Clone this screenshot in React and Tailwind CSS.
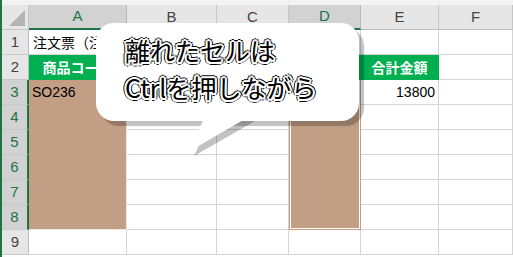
import React from 'react';

const cols = [
    { k: 'A', w: 'w-[98px]', sel: true },
    { k: 'B', w: 'w-[90px]' },
    { k: 'C', w: 'w-[72px]' },
    { k: 'D', w: 'w-[72px]', sel: true },
    { k: 'E', w: 'w-[78px]' },
    { k: 'F', w: 'w-[74px]' },
];

const jp = "font-['Noto_Sans_CJK_JP','Noto_Sans',sans-serif]";
const lat = "font-['Liberation_Sans',Arial,sans-serif]";

const headers2 = { A: '商品コード', B: '商品名', C: '単価', D: '数量', E: '合計金額' };

// returns [className, content] for a body cell
const cellFor = (r, k) => {
    const base = 'h-full border-r border-b border-[#d4d4d4] bg-white';
    if (r === 1 && k === 'A') {
        return [base + ' overflow-visible whitespace-nowrap px-[4px] text-[14px] text-black ' + jp, '注文票（注文番号別）'];
    }
    if (r === 2 && headers2[k]) {
        return ['h-full border-r border-b border-[#00b050] bg-[#00b050] justify-center text-[14px] font-bold text-white ' + jp, headers2[k]];
    }
    if (r >= 3 && r <= 8 && k === 'A') {
        const b = r === 8 ? ' border-b border-b-[#f1e7df]' : '';
        return ['h-full bg-[#c19e84] border-r border-r-[#f1e7df] px-[3px] text-[14px] text-black ' + lat + b, r === 3 ? 'SO236' : ''];
    }
    if (r >= 3 && r <= 8 && k === 'D') {
        if (r === 8) {
            return ['h-full bg-[#c19e84] border-x border-b border-[#c99a7e] shadow-[inset_1px_0_0_#fff,inset_-1px_0_0_#fff,inset_0_-1px_0_#fff]', ''];
        }
        return ['h-full bg-[#c19e84] border-x border-[#c99a7e] shadow-[inset_1px_0_0_#fff,inset_-1px_0_0_#fff]', ''];
    }
    if (r === 3 && k === 'E') {
        return [base + ' justify-end px-[3px] text-[14px] text-black ' + lat, '13800'];
    }
    return [base, ''];
};

const App = () => {
    const rows = [1, 2, 3, 4, 5, 6, 7, 8, 9];

    return (
        <div className="relative w-[513px] h-[257px] overflow-hidden bg-white flex">
            {/* selection edge */}
            <div className="w-[2px] h-full bg-[#217346]" />

            <div className="flex flex-col">
                <div className="h-[5px] w-[511px] bg-[#f3f3f3]" />

                {/* column header */}
                <div className="flex h-[25px]">
                    <div className="relative w-[27px] h-full bg-[#e6e6e6] border-r border-b border-[#c6c6c6]">
                        <svg className="absolute right-[3px] bottom-[3px]" width="16" height="16" viewBox="0 0 16 16">
                            <polygon points="16,0 16,16 0,16" fill="#b4b4b4" />
                        </svg>
                    </div>
                    {cols.map((c) => (
                        <div
                            key={c.k}
                            className={
                                c.w +
                                ' h-full flex items-center justify-center text-[15px] ' + lat + ' ' +
                                (c.sel
                                    ? 'bg-[#d2d2d2] text-[#217346] border-r border-r-[#b8b8b8] border-b-2 border-b-[#217346]'
                                    : 'bg-[#e6e6e6] text-[#444] border-r border-r-[#c6c6c6] border-b border-b-[#bdbdbd]')
                            }
                        >
                            {c.k}
                        </div>
                    ))}
                </div>

                {rows.map((r) => {
                    const sel = r >= 3 && r <= 8;
                    return (
                        <div key={r} className="flex h-[25px]">
                            <div
                                className={
                                    'w-[27px] h-full flex items-center justify-center text-[15px] border-b border-b-[#c8c8c8] ' + lat + ' ' +
                                    (sel
                                        ? 'bg-[#d2d2d2] text-[#217346] border-r-2 border-r-[#217346]'
                                        : 'bg-[#e6e6e6] text-[#444] border-r border-r-[#bdbdbd]')
                                }
                            >
                                {r}
                            </div>
                            {cols.map((c) => {
                                const [cls, content] = cellFor(r, c.k);
                                return (
                                    <div key={c.k} className={c.w + ' flex items-center ' + cls}>
                                        {content}
                                    </div>
                                );
                            })}
                        </div>
                    );
                })}
            </div>

            {/* callout */}
            <div className={"absolute left-[96px] top-[23px] w-[263px] h-[98px] rounded-[18px] bg-white shadow-[5px_5px_1px_rgba(0,0,0,0.24)] pl-[29px] pt-[9px] text-[25px] leading-[37px] font-normal text-black " + jp}>
                <div className="[text-shadow:2px_0_0_#fff,-2px_0_0_#fff,0_2px_0_#fff,0_-2px_0_#fff,1.5px_1.5px_0_#fff,-1.5px_1.5px_0_#fff,1.5px_-1.5px_0_#fff,-1.5px_-1.5px_0_#fff,3px_0_0_#000,-3px_0_0_#000,0_3px_0_#000,0_-3px_0_#000,2.2px_2.2px_0_#000,-2.2px_2.2px_0_#000,2.2px_-2.2px_0_#000,-2.2px_-2.2px_0_#000]">
                    <div>離れたセルは</div>
                    <div>Ctrlを押しながら</div>
                </div>
            </div>
            <svg className="absolute left-0 top-0 pointer-events-none" width="513" height="257" viewBox="0 0 513 257">
                <polygon points="210,121 255,121 194,156" fill="rgba(0,0,0,0.24)" />
                <polygon points="205,116 250,116 190,151" fill="#fff" />
            </svg>
        </div>
    );
};

export default App;
